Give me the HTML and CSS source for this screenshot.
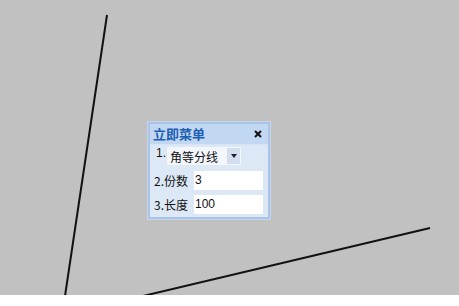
FILE: index.html
```html
<!DOCTYPE html>
<html>
<head>
<meta charset="utf-8">
<link rel="stylesheet" href="styles.css">
</head>
<body>
<div class="canvas">
  <svg class="drawing" width="459" height="295" viewBox="0 0 459 295">
    <line x1="107" y1="15" x2="65" y2="296" stroke="#111" stroke-width="2"/>
    <line x1="430" y1="228" x2="143" y2="296" stroke="#111" stroke-width="2"/>
  </svg>
  <div class="panel">
    <div class="title">
      <span class="title-text">立即菜单</span>
      <svg class="close" width="8" height="8" viewBox="0 0 8 8"><path d="M1 1L7 7M7 1L1 7" stroke="#111" stroke-width="2"/></svg>
    </div>
    <div class="body">
      <div class="row row-combo">
        <span class="num">1.</span>
        <div class="combo">
          <span class="combo-text">角等分线</span>
          <span class="combo-btn"><svg width="6" height="4" viewBox="0 0 6 4"><path d="M0 0H6L3 4Z" fill="#222"/></svg></span>
        </div>
      </div>
      <div class="row">
        <span class="label">2.份数</span>
        <div class="field">3</div>
      </div>
      <div class="row">
        <span class="label">3.长度</span>
        <div class="field">100</div>
      </div>
    </div>
  </div>
</div>
<div class="bottom"></div>
</body>
</html>
```
FILE: styles.css
```css
html, body {
  margin: 0;
  padding: 0;
  background: #ffffff;
}
body {
  font-family: "Noto Sans CJK SC", "Liberation Sans", sans-serif;
}
.canvas {
  position: relative;
  width: 459px;
  height: 295px;
  background: #c1c1c1;
  overflow: hidden;
}
.drawing {
  position: absolute;
  left: 0;
  top: 0;
}
.panel {
  position: absolute;
  left: 148px;
  top: 122px;
  width: 118px;
  height: 93px;
  border: 2px solid #a9c4e6;
  box-shadow: 0 0 0 1px #c7d6ea;
  background: #dde8f6;
  display: flex;
  flex-direction: column;
}
.title {
  height: 20px;
  background: #c2d7f1;
  border-bottom: 1px solid #d6e3f4;
  display: flex;
  align-items: center;
  justify-content: space-between;
  padding: 0 6px 0 3px;
}
.title-text {
  font-size: 13px;
  font-weight: bold;
  color: #1d5fb5;
  line-height: 20px;
}
.close {
  display: block;
}
.body {
  display: flex;
  flex-direction: column;
  padding: 0 1px 0 3px;
  gap: 4px;
}
.row {
  display: flex;
  align-items: center;
  height: 20px;
}
.row-combo {
  height: 21px;
  align-items: flex-start;
}
.num {
  font-family: "Liberation Sans", sans-serif;
  font-size: 12px;
  color: #111;
  padding: 1px 0 0 3px;
  width: 11px;
}
.combo {
  display: flex;
  align-items: center;
  height: 18px;
  margin-top: 2px;
  width: 74px;
  background: #f3f6fb;
}
.combo-text {
  font-size: 12px;
  color: #111;
  padding-left: 3px;
  flex: 1;
}
.combo-btn {
  width: 13px;
  height: 16px;
  background: #d3def0;
  display: flex;
  align-items: center;
  justify-content: center;
  margin-right: 1px;
}
.label {
  font-size: 12px;
  color: #111;
  width: 40px;
  padding-left: 1px;
}
.field {
  width: 68px;
  height: 19px;
  background: #ffffff;
  font-family: "Liberation Sans", sans-serif;
  font-size: 12px;
  color: #111;
  line-height: 19px;
  padding-left: 1px;
}
.bottom {
  height: 11px;
  background: #ffffff;
}
```
